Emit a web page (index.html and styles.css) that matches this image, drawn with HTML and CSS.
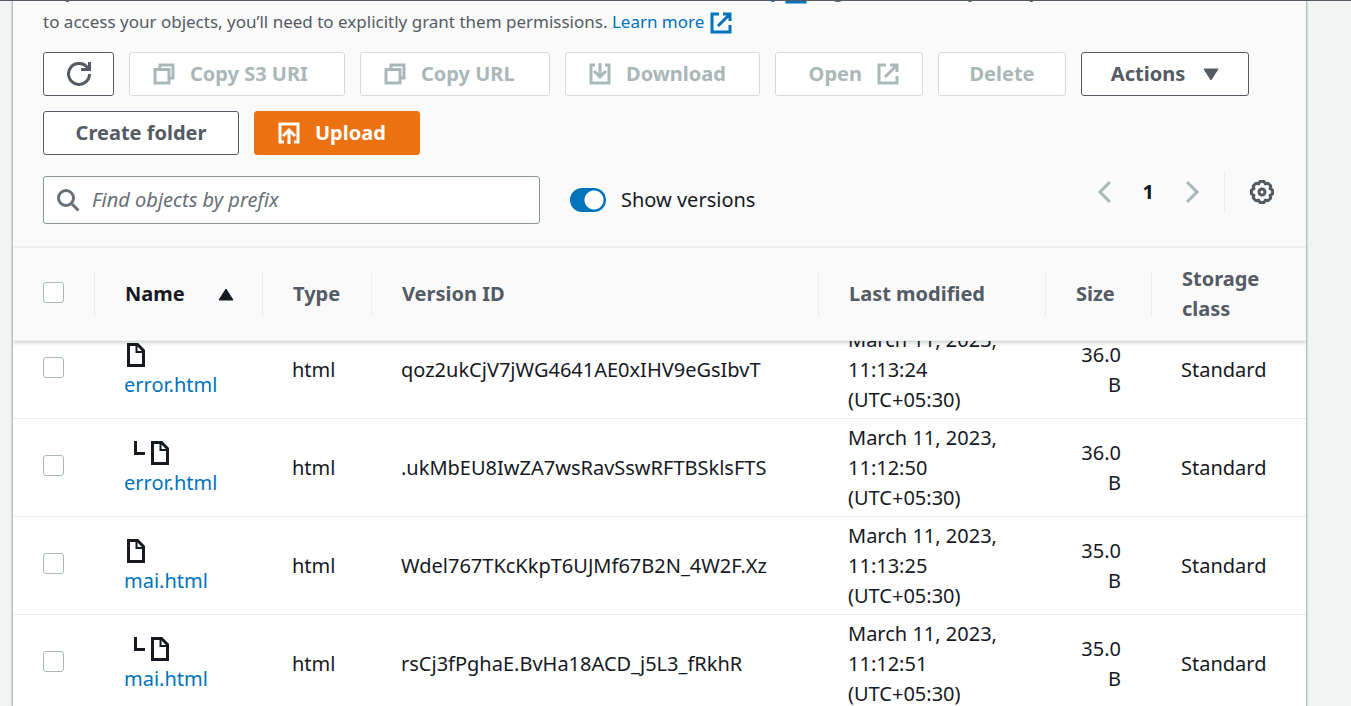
FILE: index.html
```html
<!DOCTYPE html>
<html lang="en">
<head>
<meta charset="utf-8">
<title>Objects</title>
<link rel="stylesheet" href="styles.css">
</head>
<body>
<svg class="sprite" aria-hidden="true">
  <symbol id="copy" viewBox="0 0 24 24"><path d="M3 7.500h14V21H3zM8 7V3h13v13h-4" /></symbol>
  <symbol id="external" viewBox="0 0 24 24"><path d="M10 3H3v18h18v-7M14 3h7v7M21 3 9 15" /></symbol>
  <symbol id="file" viewBox="0 0 24 24"><path d="M4.500 1.500h9l6 6v15h-15z"/><path stroke-width="2" d="M12.500 1v8H20"/></symbol>
</svg>
<main class="panel">
  <p class="description">
    <span class="line">Objects are the fundamental entities stored in Amazon S3. You can use <a href="#">Amazon S3 inventory <svg class="icon"><use href="#external"/></svg></a> to get a list of all objects in your bucket. For others</span>
    <span class="line">to access your objects, you’ll need to explicitly grant them permissions. <a href="#">Learn more <svg class="icon"><use href="#external"/></svg></a></span>
  </p>
  <div class="actions">
    <button class="btn w-refresh" aria-label="Refresh"><svg class="icon refresh" viewBox="0 0 24 24"><path d="M22.500 12A10.500 10.500 0 1 1 21 6.500M14 7.500h8.500V0"/></svg></button>
    <button class="btn lead w-uri" disabled><svg class="icon"><use href="#copy"/></svg>Copy S3 URI</button>
    <button class="btn lead w-url" disabled><svg class="icon"><use href="#copy"/></svg>Copy URL</button>
    <button class="btn lead w-download" disabled><svg class="icon" viewBox="0 0 24 24"><path d="M7 3H3v18h18V3h-4M12 1v14M6 9l6 6 6-6"/></svg>Download</button>
    <button class="btn trail w-open" disabled>Open<svg class="icon"><use href="#external"/></svg></button>
    <button class="btn w-delete" disabled>Delete</button>
    <button class="btn menu w-actions">Actions<svg class="caret" viewBox="0 0 16 13"><path d="M1 1h14L8 12z"/></svg></button>
    <button class="btn w-create">Create folder</button>
    <button class="btn lead primary w-upload"><svg class="icon" viewBox="0 0 24 24"><path d="M7 21H3V3h18v18h-4M12 23V9M6 15l6-6 6 6"/></svg>Upload</button>
  </div>
  <div class="filters">
    <div class="search">
      <svg class="icon" viewBox="0 0 24 24"><circle cx="10" cy="10" r="7.500"/><path d="m15 15 7.500 7.500"/></svg>
      <input type="text" placeholder="Find objects by prefix" aria-label="Find objects by prefix">
    </div>
    <label class="toggle"><input type="checkbox" checked><span>Show versions</span></label>
    <div class="pager">
      <button class="plain" aria-label="Previous page" disabled><svg class="chevron" viewBox="0 0 14 24"><path d="M13 2 3 12l10 10"/></svg></button>
      <button class="plain page">1</button>
      <button class="plain" aria-label="Next page" disabled><svg class="chevron" viewBox="0 0 14 24"><path d="m1 2 10 10L1 22"/></svg></button>
      <button class="plain settings" aria-label="Preferences"><svg class="gear" viewBox="0 0 26 26"><circle cx="13" cy="13" r="3"/><path d="M11 2.500h4l1.400 2.400 2.600-.7L21.800 7l-.7 2.600 2.400 1.400v4l-2.400 1.400.7 2.600-2.800 2.800-2.600-.7-1.400 2.400h-4l-1.400-2.400-2.600.7L4.200 19l.7-2.600L2.500 15v-4l2.400-1.400L4.200 7 7 4.200l2.600.7z"/></svg></button>
    </div>
  </div>
  <table class="objects">
    <thead>
      <tr>
        <th><input class="tick" type="checkbox" aria-label="Select all"></th>
        <th class="sorted">Name<svg class="caret" viewBox="0 0 16 13"><path d="M1 12h14L8 1z"/></svg></th>
        <th>Type</th>
        <th>Version ID</th>
        <th>Last modified</th>
        <th>Size</th>
        <th>Storage class</th>
      </tr>
    </thead>
    <tbody>
      <tr>
        <td><input class="tick" type="checkbox" aria-label="Select error.html"></td>
        <td class="name"><svg class="file"><use href="#file"/></svg><a href="#">error.html</a></td>
        <td>html</td>
        <td>qoz2ukCjV7jWG4641AE0xIHV9eGsIbvT</td>
        <td>March 11, 2023, 11:13:24 (UTC+05:30)</td>
        <td class="size">36.0 B</td>
        <td>Standard</td>
      </tr>
      <tr>
        <td><input class="tick" type="checkbox" aria-label="Select error.html, older version"></td>
        <td class="name older"><svg class="file"><use href="#file"/></svg><a href="#">error.html</a></td>
        <td>html</td>
        <td>.ukMbEU8IwZA7wsRavSswRFTBSklsFTS</td>
        <td>March 11, 2023, 11:12:50 (UTC+05:30)</td>
        <td class="size">36.0 B</td>
        <td>Standard</td>
      </tr>
      <tr>
        <td><input class="tick" type="checkbox" aria-label="Select mai.html"></td>
        <td class="name"><svg class="file"><use href="#file"/></svg><a href="#">mai.html</a></td>
        <td>html</td>
        <td>Wdel767TKcKkpT6UJMf67B2N_4W2F.Xz</td>
        <td>March 11, 2023, 11:13:25 (UTC+05:30)</td>
        <td class="size">35.0 B</td>
        <td>Standard</td>
      </tr>
      <tr>
        <td><input class="tick" type="checkbox" aria-label="Select mai.html, older version"></td>
        <td class="name older"><svg class="file"><use href="#file"/></svg><a href="#">mai.html</a></td>
        <td>html</td>
        <td>rsCj3fPghaE.BvHa18ACD_j5L3_fRkhR</td>
        <td>March 11, 2023, 11:12:51 (UTC+05:30)</td>
        <td class="size">35.0 B</td>
        <td>Standard</td>
      </tr>
    </tbody>
  </table>
</main>
</body>
</html>
```

FILE: styles.css
```css
*, *::before { box-sizing: border-box; }

body {
  margin: 0;
  height: 100vh;
  overflow: hidden;
  display: flex;
  padding: 0 44px 0 12px;
  background: #f2f3f3;
  border-top: 1px solid #545b64;
  color: #16191f;
  font: 20px/30px "Noto Sans", "Open Sans", sans-serif;
}

.sprite { position: absolute; width: 0; height: 0; }

svg { fill: none; stroke: currentColor; flex: none; }

.icon { width: 24px; height: 24px; stroke-width: 3; }

a { color: #0073bb; text-decoration: none; }

button, input { font: inherit; color: inherit; margin: 0; }

.panel {
  flex: 1;
  min-width: 0;
  overflow: hidden;
  background: #fafafa;
  border: 1px solid #b4bcbf;
  border-width: 0 1px;
  box-shadow: 0 1px 2px rgba(0, 28, 36, 0.3);
}

.description {
  height: 36px;
  margin: 0;
  padding: 0 30px;
  display: flex;
  flex-direction: column;
  justify-content: flex-end;
  overflow: hidden;
  color: #545b64;
  font-size: 17px;
  white-space: nowrap;
}

.line { height: 30px; flex: none; }
.line .icon { vertical-align: middle; }

.actions {
  display: flex;
  flex-wrap: wrap;
  gap: 15px;
  padding: 15px 30px 0;
}

.btn {
  height: 44px;
  padding: 0;
  display: flex;
  align-items: center;
  justify-content: center;
  gap: 14px;
  background: #fff;
  border: 1px solid #545b64;
  border-radius: 3px;
  color: #545b64;
  font-size: 20px;
  font-weight: 700;
  white-space: nowrap;
}

.btn:disabled { color: #aab7b8; border-color: #d5dbdb; }
.lead { justify-content: flex-start; padding-left: 22px; }
.trail { justify-content: flex-end; padding-right: 22px; }
.menu { gap: 18px; }
.primary { background: #ec7211; border-color: #ec7211; color: #fff; }

.w-refresh { width: 71px; }
.w-uri { width: 216px; }
.w-url { width: 190px; }
.w-download { width: 195px; }
.w-open { width: 148px; }
.w-delete { width: 128px; }
.w-actions { width: 168px; }
.w-create { width: 196px; }
.w-upload { width: 166px; }

.caret { width: 16px; height: 13px; fill: currentColor; stroke-linejoin: round; }

.filters {
  display: flex;
  align-items: flex-start;
  padding: 21px 31px 23px 30px;
}

.search {
  width: 497px;
  height: 48px;
  display: flex;
  align-items: center;
  gap: 12px;
  padding: 0 12px;
  background: #fff;
  border: 1px solid #879596;
  border-radius: 3px;
  color: #687078;
}

.search input {
  flex: 1;
  min-width: 0;
  padding: 0;
  border: 0;
  outline: 0;
  background: none;
}

.search input::placeholder { color: #687078; font-style: italic; opacity: 1; }

.toggle {
  height: 48px;
  margin-left: 30px;
  display: flex;
  align-items: center;
  gap: 15px;
}

.toggle input {
  appearance: none;
  width: 36px;
  height: 24px;
  border-radius: 12px;
  background: radial-gradient(circle at 24px 12px, #fff 9px, transparent 10px), #0073bb;
}

.pager {
  height: 42px;
  margin: -5px 0 0 auto;
  display: flex;
  align-items: center;
}

.plain {
  padding: 0;
  border: 0;
  background: none;
  display: flex;
}

.plain:disabled { color: #aab7b8; }
.page { margin: 0 32px; font-weight: 700; }
.chevron { width: 14px; height: 24px; stroke-width: 3; }

.settings {
  height: 42px;
  align-items: center;
  margin-left: 24px;
  padding-left: 24px;
  border-left: 1px solid #eaeded;
  color: #545b64;
}

.gear { width: 26px; height: 26px; stroke-width: 3; stroke-linejoin: round; }

.objects, .objects thead, .objects tbody { display: block; }

.objects tr {
  display: grid;
  grid-template-columns: 82px 168px 109px minmax(0, 1fr) 227px 106px 154px;
}

.objects thead {
  position: relative;
  background: #fafafa;
  border-top: 1px solid #eaeded;
  border-bottom: 1px solid #eaeded;
  box-shadow: 0 2px 4px rgba(0, 28, 36, 0.2);
}

.objects th {
  display: flex;
  align-items: center;
  justify-content: space-between;
  margin: 23px 0;
  height: 46px;
  padding: 0 28px 0 30px;
  border-right: 1px solid #eaeded;
  color: #545b64;
  text-align: left;
}

.objects th:last-child { border-right: 0; }
.objects .sorted { color: #16191f; }

/* The first row is partly scrolled under the sticky header. */
.objects tbody { margin-top: -20px; background: #fff; }

.objects tbody tr { height: 98px; border-bottom: 1px solid #eaeded; }

.objects td {
  display: flex;
  align-items: center;
  padding: 0 28px 0 29px;
}

.objects th:first-child, .objects td:first-child { padding-left: 30px; }

.objects .size { text-align: right; justify-content: flex-end; padding-right: 31px; }

.objects .name {
  flex-direction: column;
  align-items: flex-start;
  justify-content: center;
}

.file { width: 24px; height: 24px; margin: 3px 0; stroke-width: 3; }

.older .file { margin-left: 24px; }

.older::before {
  content: "";
  position: absolute;
  width: 11px;
  height: 14px;
  margin: -40px 0 0 10px;
  border: solid #16191f;
  border-width: 0 0 3px 3px;
}

.tick {
  appearance: none;
  width: 21px;
  height: 21px;
  margin-bottom: 4px;
  background: #fff;
  border: 1px solid #aab7b8;
  border-radius: 3px;
}
```
